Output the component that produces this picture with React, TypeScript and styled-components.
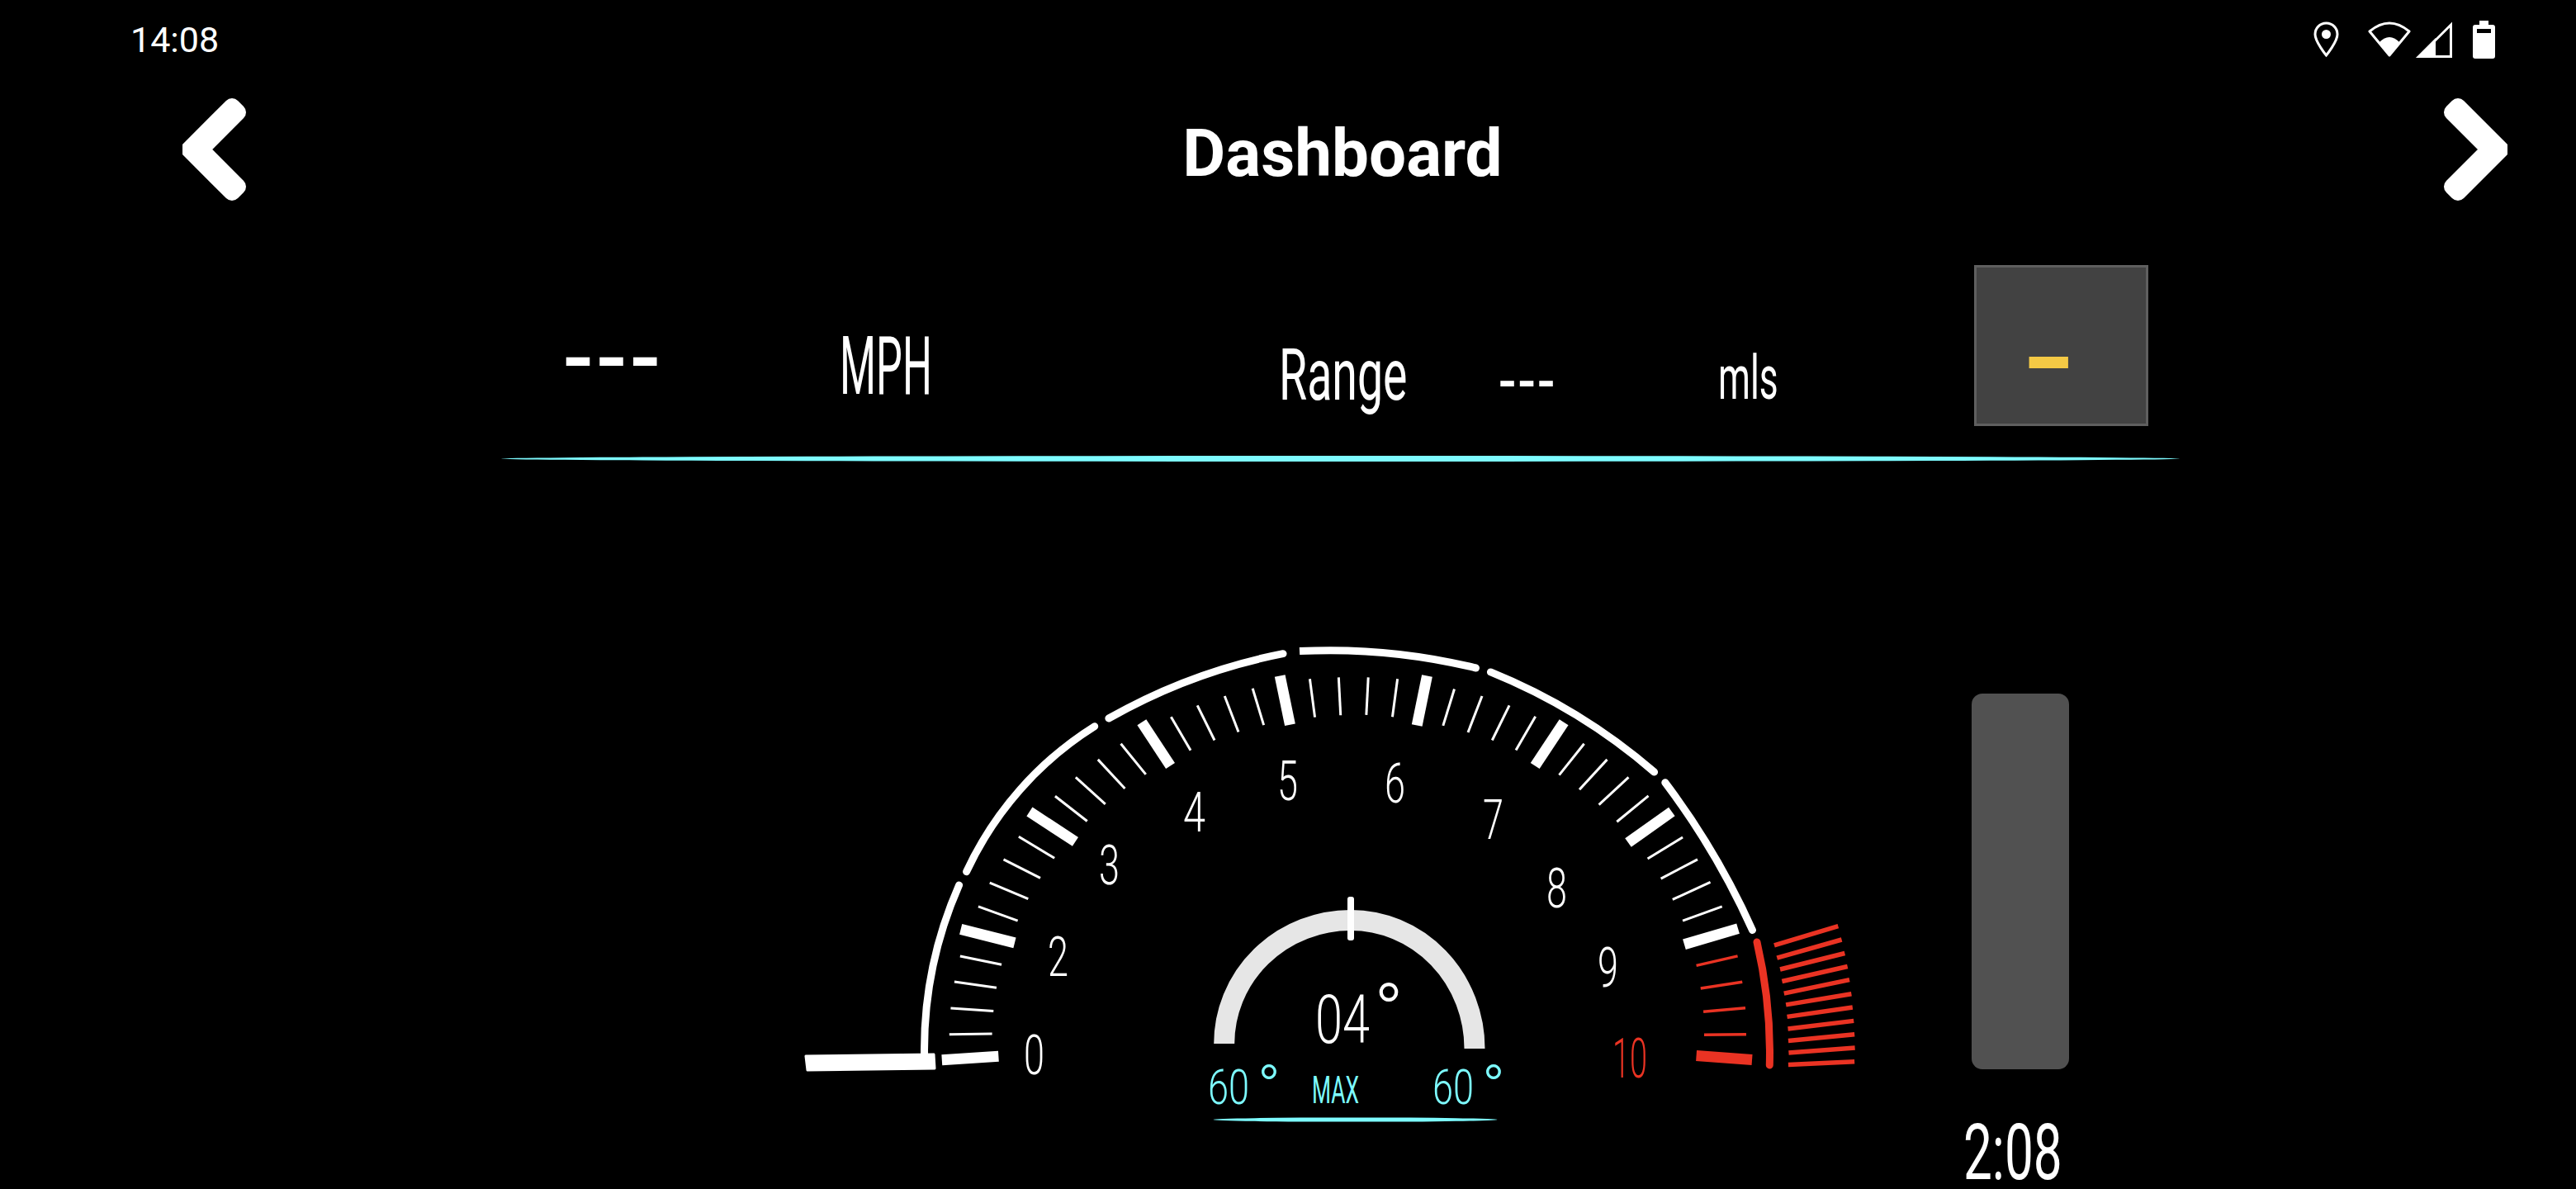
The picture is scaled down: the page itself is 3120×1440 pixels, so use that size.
import React from "react";
import styled, { createGlobalStyle } from "styled-components";

const CYAN = "#7dfbff";
const RED = "#ea3323";

const GlobalStyle = createGlobalStyle`
  html, body {
    margin: 0;
    background: #000;
  }
`;

const Page = styled.div`
  width: 3120px;
  height: 1440px;
  background: #000;
  color: #fff;
  font-family: Roboto, "Liberation Sans", sans-serif;
  display: flex;
  flex-direction: column;
  overflow: hidden;
`;

const StatusBar = styled.div`
  height: 96px;
  padding: 0 98px 0 158px;
  display: flex;
  align-items: center;
  justify-content: space-between;
  flex: none;
`;

const Clock = styled.span`
  font-size: 43px;
  font-weight: 400;
  line-height: 1;
`;

const StatusIcons = styled.div`
  display: flex;
  align-items: center;
`;

const StatusIcon = styled.svg<{ $gap?: number }>`
  display: block;
  margin-left: ${({ $gap }) => $gap ?? 0}px;
`;

const Header = styled.div`
  height: 170px;
  padding: 0 83px 0 221px;
  display: flex;
  align-items: center;
  justify-content: space-between;
  flex: none;
`;

const ChevronIcon = styled.svg<{ $flip?: boolean }>`
  display: block;
  transform: scaleX(${({ $flip }) => ($flip ? -1 : 1)});
`;

const Title = styled.h1`
  margin: 10px 6px 0 0;
  font-size: 80px;
  font-weight: 700;
  line-height: 1;
`;

const InfoRow = styled.div`
  margin-top: 55px;
  padding-left: 680px;
  height: 195px;
  display: grid;
  grid-template-columns: 337px 532px 265px 267px 310px 211px;
  flex: none;
`;

const Reading = styled.span<{ $size: number; $scale: number; $top: number; $weight?: number }>`
  display: block;
  margin-top: ${({ $top }) => $top}px;
  font-size: ${({ $size }) => $size}px;
  font-weight: ${({ $weight }) => $weight ?? 400};
  line-height: 1;
  white-space: nowrap;
  transform: scaleX(${({ $scale }) => $scale});
  transform-origin: left top;
`;

const ModeBox = styled.div`
  box-sizing: border-box;
  width: 211px;
  height: 195px;
  padding-left: 54px;
  background: #424242;
  border: 3px solid #5f5f5f;
  overflow: hidden;
`;

const ModeValue = styled.span`
  display: block;
  margin-top: 48px;
  font-size: 126px;
  font-weight: 700;
  line-height: 1;
  color: #f4c945;
  transform: scaleX(1.36);
  transform-origin: left top;
`;

const Lens = styled.div<{ $width: number; $left: number; $top: number; $height: number }>`
  width: ${({ $width }) => $width}px;
  height: ${({ $height }) => $height}px;
  margin-left: ${({ $left }) => $left}px;
  margin-top: ${({ $top }) => $top}px;
  border-radius: 50%;
  background: ${CYAN};
  flex: none;
`;

const Cluster = styled.div`
  margin-top: 221px;
  padding-left: 970px;
  display: flex;
  align-items: flex-start;
`;

const GaugeSvg = styled.svg`
  display: block;
  flex: none;
`;

const Tick = styled.line<{ $width: number; $red?: boolean }>`
  stroke: ${({ $red }) => ($red ? RED : "#fff")};
  stroke-width: ${({ $width }) => $width}px;
`;

const Rim = styled.path<{ $red?: boolean; $butt?: boolean }>`
  fill: none;
  stroke: ${({ $red }) => ($red ? RED : "#fff")};
  stroke-width: 9px;
  stroke-linecap: ${({ $butt }) => ($butt ? "butt" : "round")};
`;

const GaugeText = styled.text<{ $tone?: "cyan" | "red"; $weight?: number }>`
  fill: ${({ $tone }) => ($tone === "cyan" ? CYAN : $tone === "red" ? RED : "#fff")};
  font-family: Roboto, "Liberation Sans", sans-serif;
  font-weight: ${({ $weight }) => $weight ?? 300};
`;

const SidePanel = styled.div`
  margin-left: 118px;
  padding-top: 60px;
  width: 200px;
  flex: none;
`;

const Level = styled.div`
  width: 118px;
  height: 455px;
  border-radius: 13px;
  background: #515151;
`;

const Trip = styled.span`
  display: block;
  margin: 64px 0 0 -10px;
  font-size: 94px;
  font-weight: 400;
  line-height: 0.8;
  transform: scaleX(0.66);
  transform-origin: left top;
`;

type Pair = [number, number];
type Seg = [number, number, number, number];

// points read off the two crops of the dial, mapped to page px
const fromLeft = (x: number, y: number): Pair => [940 + x / 2.45, 740 + y / 2.613];
const fromRight = (x: number, y: number): Pair => [1560 + x / 2.119, 740 + y / 2.613];

const leftMinor: Seg[] = [
  [514, 1340, 641, 1338], [518, 1257, 645, 1266], [529, 1173, 654, 1192], [546, 1092, 669, 1119],
  [600, 935, 717, 980], [634, 860, 748, 911], [675, 786, 784, 845], [720, 714, 826, 782],
  [828, 586, 923, 665], [889, 526, 977, 611], [955, 470, 1035, 562], [1023, 420, 1097, 517],
  [1172, 335, 1230, 441], [1250, 299, 1301, 409], [1331, 269, 1372, 383], [1414, 245, 1447, 361],
];
const leftMajor: Seg[] = [
  [492, 1421, 660, 1409], [548, 1007, 708, 1050], [752, 635, 888, 730],
  [1085, 352, 1170, 490], [1495, 205, 1525, 360],
];
const rightMinor: Seg[] = [
  [56, 215, 69, 336], [130, 210, 135, 330], [206, 210, 201, 329], [281, 215, 268, 335],
  [427, 247, 398, 363], [498, 269, 462, 384], [568, 299, 524, 409], [635, 334, 585, 440],
  [760, 420, 696, 519], [819, 470, 748, 565], [874, 526, 798, 613], [925, 585, 844, 667],
  [1013, 716, 923, 784], [1051, 786, 957, 847], [1084, 858, 987, 913], [1114, 935, 1013, 980],
];
const rightMajor: Seg[] = [
  [357, 205, 331, 362], [708, 352, 634, 490], [985, 635, 873, 733], [1155, 1005, 1017, 1055],
];
const redMinor: Seg[] = [
  [1154, 1092, 1048, 1122], [1166, 1174, 1059, 1194], [1174, 1256, 1066, 1268], [1176, 1340, 1068, 1341],
];
const redFan: Seg[] = [
  [1412, 997, 1248, 1058], [1421, 1040, 1255, 1098], [1429, 1083, 1263, 1134], [1436, 1125, 1268, 1172],
  [1441, 1167, 1273, 1210], [1446, 1212, 1278, 1246], [1449, 1254, 1281, 1284], [1452, 1297, 1283, 1322],
  [1454, 1340, 1284, 1360], [1455, 1382, 1285, 1398], [1454, 1426, 1284, 1436],
];

// circular arc through start, middle and end
const rimPath = (a: Pair, m: Pair, b: Pair) => {
  const ab = Math.hypot(a[0] - b[0], a[1] - b[1]);
  const am = Math.hypot(a[0] - m[0], a[1] - m[1]);
  const mb = Math.hypot(m[0] - b[0], m[1] - b[1]);
  const area = Math.abs((m[0] - a[0]) * (b[1] - a[1]) - (b[0] - a[0]) * (m[1] - a[1])) / 2;
  const r = (ab * am * mb) / (4 * area);
  return `M${a[0]} ${a[1]} A${r} ${r} 0 0 1 ${b[0]} ${b[1]}`;
};

const rims: { a: Pair; m: Pair; b: Pair; red?: boolean; butt?: boolean }[] = [
  { a: [1119.6, 1280], m: [1133, 1157], b: [1161.6, 1072] },
  { a: [1170.6, 1055.7], m: [1244, 947], b: [1325.7, 879.7] },
  { a: [1342.9, 870], m: [1446, 822], b: [1554, 791.7] },
  { a: [1574, 788.6], m: [1681, 791], b: [1787.5, 809], butt: true },
  { a: [1805.4, 813.9], m: [1909, 866], b: [2003.6, 935] },
  { a: [2016.8, 947.8], m: [2074, 1033], b: [2122.5, 1126.5] },
  { a: [2128, 1141], m: [2139.5, 1207], b: [2143.3, 1290], red: true },
];

const dialNumbers: { t: string; x: number; w: number; base: number; tone?: "red" }[] = [
  { t: "0", x: 1240, w: 25, base: 1300.7 },
  { t: "2", x: 1269, w: 25, base: 1182 },
  { t: "3", x: 1331, w: 25, base: 1071 },
  { t: "4", x: 1433, w: 27, base: 1007 },
  { t: "5", x: 1547, w: 25, base: 969 },
  { t: "6", x: 1677, w: 25, base: 971.5 },
  { t: "7", x: 1796, w: 25, base: 1015.5 },
  { t: "8", x: 1873, w: 25, base: 1098.6 },
  { t: "9", x: 1935, w: 25, base: 1195 },
  { t: "10", x: 1953, w: 42, base: 1305, tone: "red" },
];

const renderTicks = (
  segs: Seg[],
  map: (x: number, y: number) => Pair,
  width: number,
  red?: boolean
) =>
  segs.map((s, i) => {
    const [x1, y1] = map(s[0], s[1]);
    const [x2, y2] = map(s[2], s[3]);
    return <Tick key={i} x1={x1} y1={y1} x2={x2} y2={y2} $width={width} $red={red} />;
  });

const Degrees = ({ x }: { x: number }) => (
  <GaugeText fontSize={59} $tone="cyan">
    <tspan x={x} y={1337} textLength={50} lengthAdjust="spacingAndGlyphs">
      60
    </tspan>
    <tspan x={x + 74} y={1343} fontSize={75} textAnchor="middle">
      °
    </tspan>
  </GaugeText>
);

const Gauge = () => (
  <GaugeSvg width={1300} height={600} viewBox="970 780 1300 600">
    <polygon
      points="976,1279 1131,1277 1132,1294 978,1296"
      fill="#fff"
      stroke="#fff"
      strokeWidth={3}
      strokeLinejoin="round"
    />
    {rims.map((r, i) => (
      <Rim key={i} d={rimPath(r.a, r.m, r.b)} $red={r.red} $butt={r.butt} />
    ))}
    <circle cx={1787.5} cy={809} r={4.5} fill="#fff" />
    {renderTicks(leftMinor, fromLeft, 3)}
    {renderTicks(leftMajor, fromLeft, 13)}
    {renderTicks(rightMinor, fromRight, 3)}
    {renderTicks(rightMajor, fromRight, 13)}
    {renderTicks(redMinor, fromRight, 3.5, true)}
    {renderTicks([[1191, 1420, 1048, 1407]], fromRight, 13, true)}
    {renderTicks(redFan, fromRight, 5.5, true)}

    {dialNumbers.map((n) => (
      <GaugeText
        key={n.t}
        x={n.x}
        y={n.base}
        fontSize={66}
        textLength={n.w}
        lengthAdjust="spacingAndGlyphs"
        $tone={n.tone}
      >
        {n.t}
      </GaugeText>
    ))}

    <path
      d="M1482.7 1264 A153.3 149.5 0 0 1 1636 1114.5 A150 155.5 0 0 1 1786 1270"
      fill="none"
      stroke="#e6e6e6"
      strokeWidth={25}
    />
    <rect x={1632} y={1086} width={8} height={53} rx={3} fill="#fff" />

    <GaugeText fontSize={82}>
      <tspan x={1593} y={1263} textLength={66} lengthAdjust="spacingAndGlyphs">
        04
      </tspan>
      <tspan x={1682} y={1258} fontSize={95} textAnchor="middle">
        °
      </tspan>
    </GaugeText>

    <Degrees x={1463} />
    <GaugeText x={1589} y={1336} fontSize={46} textLength={57} lengthAdjust="spacingAndGlyphs" $tone="cyan" $weight={400}>
      MAX
    </GaugeText>
    <Degrees x={1735} />

    <ellipse cx={1641.5} cy={1356} rx={172} ry={2.6} fill={CYAN} />
  </GaugeSvg>
);

const Chevron = ({ flip }: { flip?: boolean }) => (
  <ChevronIcon $flip={flip} width={78} height={124} viewBox="0 0 78 124">
    <polygon
      points="60,10 67,17 22,62 67,107 60,114 8,62"
      fill="#fff"
      stroke="#fff"
      strokeWidth={20}
      strokeLinejoin="round"
    />
  </ChevronIcon>
);

export default function App() {
  return (
    <Page>
      <GlobalStyle />
      <StatusBar>
        <Clock>14:08</Clock>
        <StatusIcons>
          <StatusIcon width={31} height={44} viewBox="0 0 31 44">
            <path
              d="M15.5 2C7.5 2 2 8.5 2 15.5C2 24.5 15.5 41 15.5 41C15.5 41 29 24.5 29 15.5C29 8.5 23.5 2 15.5 2Z"
              fill="none"
              stroke="#fff"
              strokeWidth={3}
            />
            <circle cx={15.5} cy={15.5} r={5.5} fill="#fff" />
          </StatusIcon>
          <StatusIcon $gap={35} width={52} height={44} viewBox="0 0 52 44">
            <path d="M2 12Q26 -8 50 12L26 41Z" fill="none" stroke="#fff" strokeWidth={3} strokeLinejoin="round" />
            <path d="M13 26Q26 12 39 26L26 41Z" fill="#fff" />
          </StatusIcon>
          <StatusIcon $gap={6} width={44} height={44} viewBox="0 0 44 44">
            <path d="M42.5 4V42.5H4Z" fill="none" stroke="#fff" strokeWidth={3} />
            <path d="M0 44L24 20V44Z" fill="#fff" />
          </StatusIcon>
          <StatusIcon $gap={25} width={27} height={46} viewBox="0 0 27 46">
            <path
              fillRule="evenodd"
              d="M8 0H19V5H24Q27 5 27 8V43Q27 46 24 46H3Q0 46 0 43V8Q0 5 3 5H8ZM5 10V15H22V10Z"
              fill="#fff"
            />
          </StatusIcon>
        </StatusIcons>
      </StatusBar>

      <Header>
        <Chevron />
        <Title>Dashboard</Title>
        <Chevron flip />
      </Header>

      <InfoRow>
        <Reading $size={92} $scale={1.12} $top={68} $weight={700}>---</Reading>
        <Reading $size={98} $scale={0.515} $top={74}>MPH</Reading>
        <Reading $size={88} $scale={0.63} $top={89}>Range</Reading>
        <Reading $size={62} $scale={0.96} $top={110} $weight={700}>---</Reading>
        <Reading $size={74} $scale={0.6} $top={100}>mls</Reading>
        <ModeBox>
          <ModeValue>-</ModeValue>
        </ModeBox>
      </InfoRow>

      <Lens $width={2033} $height={7} $left={607} $top={36} />

      <Cluster>
        <Gauge />
        <SidePanel>
          <Level />
          <Trip>2:08</Trip>
        </SidePanel>
      </Cluster>
    </Page>
  );
}
